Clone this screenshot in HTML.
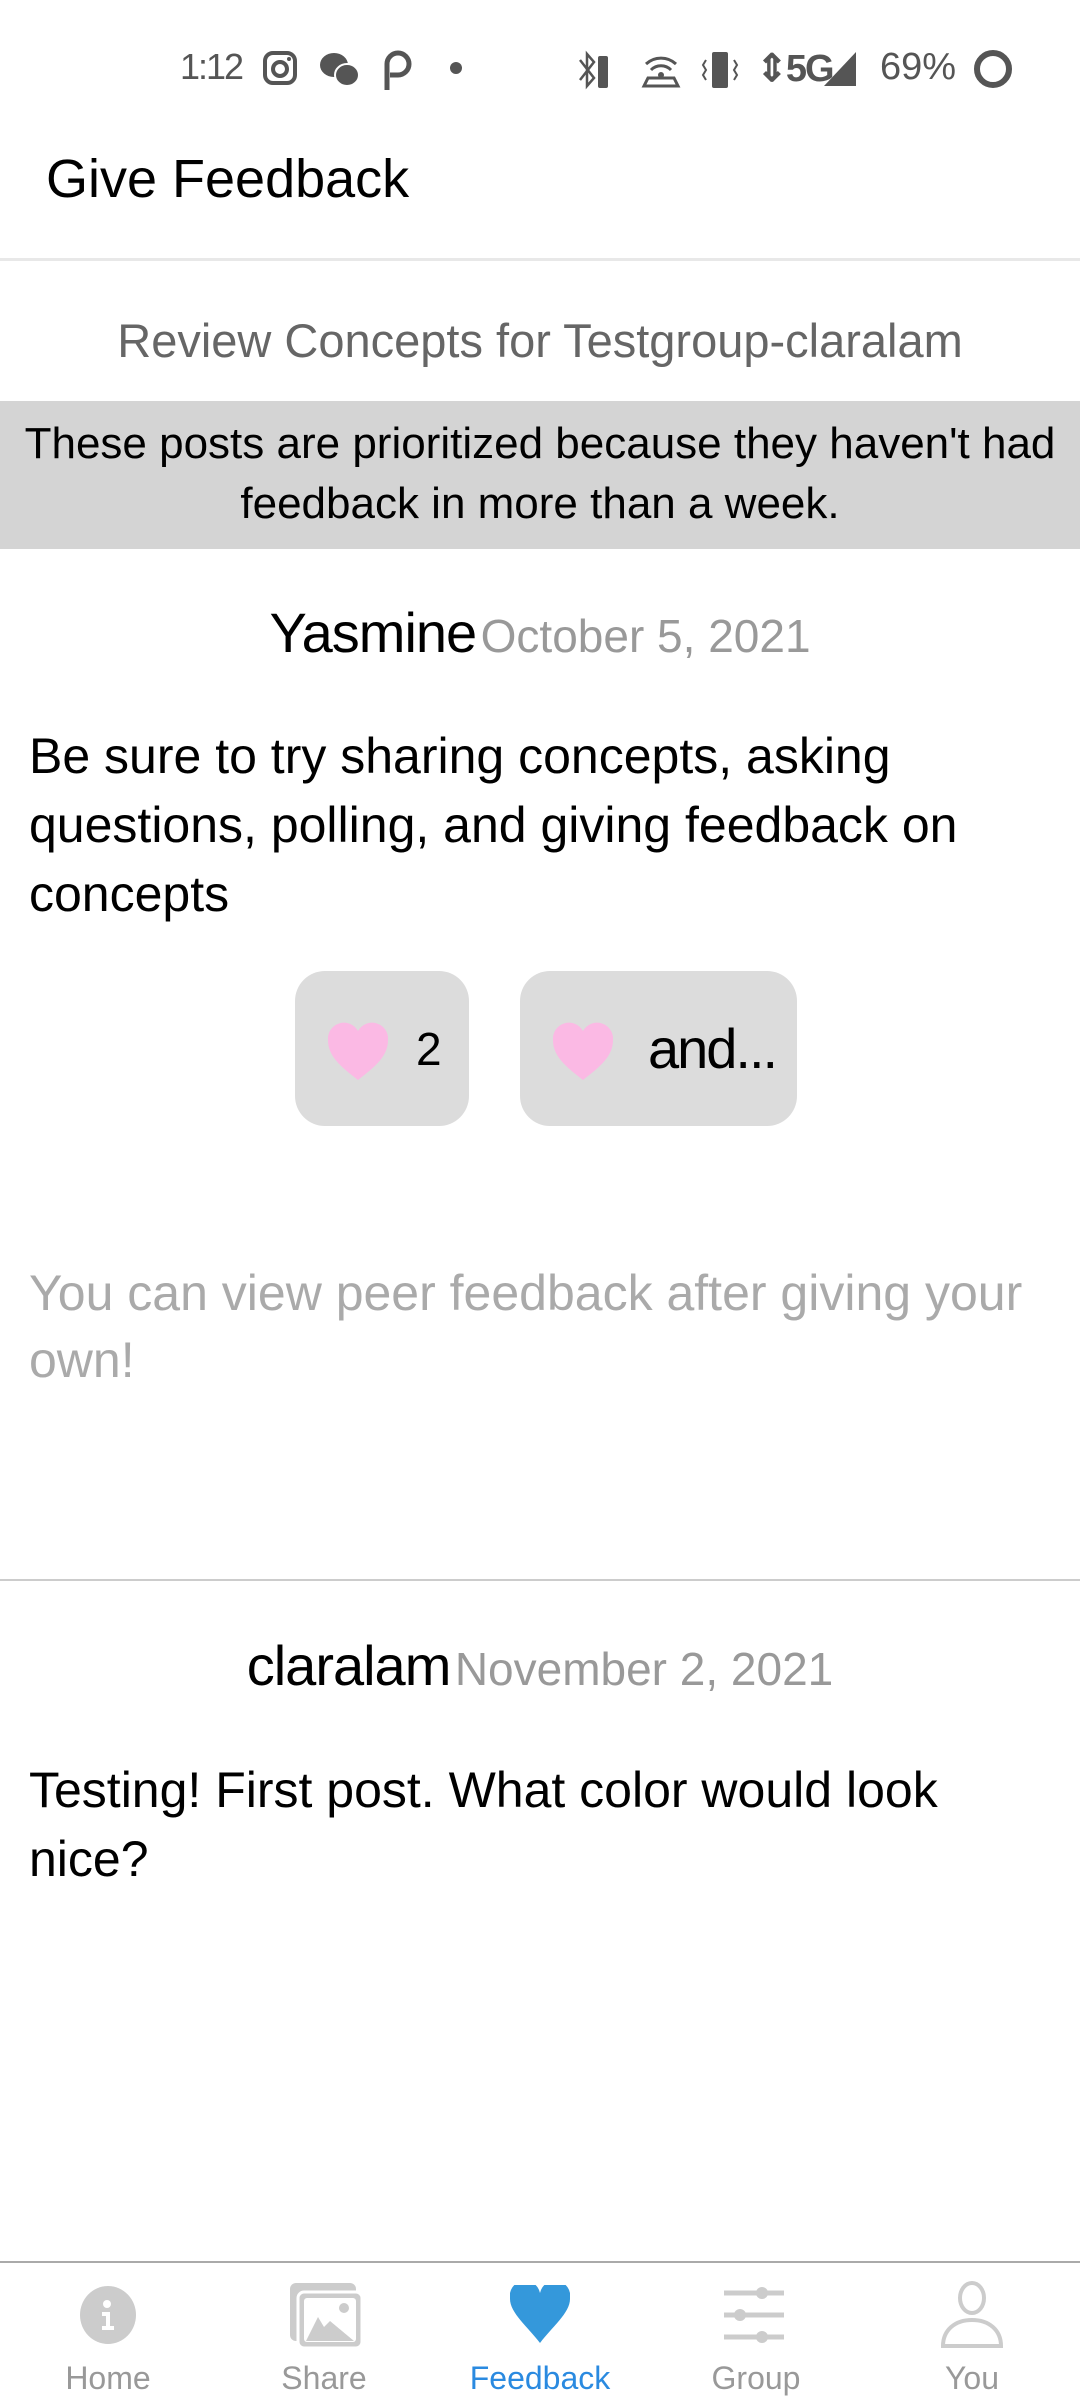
<!DOCTYPE html>
<html><head><meta charset="utf-8"><style>
*{margin:0;padding:0;box-sizing:border-box}
body{width:1080px;height:2400px;background:#fff;font-family:"Liberation Sans",sans-serif;position:relative;overflow:hidden;color:#000}
.a{position:absolute;white-space:nowrap}
.c{left:0;width:1080px;text-align:center}
.btn{position:absolute;background:#dcdcdc;border-radius:30px}
.nl{position:absolute;top:2360px;width:216px;text-align:center;font-size:32px;color:#999}
</style></head><body>
<!-- status bar -->
<div class="a" style="left:180px;top:46px;font-size:36px;color:#555;letter-spacing:-2px">1:12</div>
<svg class="a" style="left:262px;top:50px" width="36" height="36" viewBox="0 0 36 36"><rect x="3" y="3" width="30" height="30" rx="8" fill="none" stroke="#555" stroke-width="4"/><circle cx="18" cy="19" r="7" fill="none" stroke="#555" stroke-width="4"/><circle cx="27" cy="9" r="2" fill="#555"/></svg>
<svg class="a" style="left:318px;top:50px" width="44" height="40" viewBox="0 0 44 40"><ellipse cx="16" cy="15" rx="14" ry="12" fill="#555"/><ellipse cx="29" cy="25" rx="12" ry="11" fill="#555" stroke="#fff" stroke-width="2"/></svg>
<svg class="a" style="left:382px;top:50px" width="30" height="42" viewBox="0 0 30 42"><path d="M5 40V14a11 11 0 1 1 11 11H8" fill="none" stroke="#555" stroke-width="5"/></svg>
<div class="a" style="left:450px;top:62px;width:12px;height:12px;border-radius:6px;background:#555"></div>
<svg class="a" style="left:578px;top:50px" width="40" height="40" viewBox="0 0 40 40"><path d="M2 10L16 28L9 36V4l7 8L2 30" fill="none" stroke="#555" stroke-width="2.5"/><rect x="20" y="6" width="10" height="32" rx="2" fill="#555"/></svg>
<svg class="a" style="left:640px;top:52px" width="42" height="36" viewBox="0 0 42 36"><path d="M6 12a22 22 0 0 1 30 0M11 18a14 14 0 0 1 20 0" fill="none" stroke="#555" stroke-width="3"/><circle cx="21" cy="23" r="3" fill="#555"/><path d="M4 34h34l-4-8H8z" fill="none" stroke="#555" stroke-width="3"/></svg>
<svg class="a" style="left:700px;top:50px" width="40" height="40" viewBox="0 0 40 40"><rect x="12" y="2" width="16" height="36" rx="2" fill="#555"/><path d="M6 10l-3 5 3 5-3 5 3 5M34 10l3 5-3 5 3 5-3 5" fill="none" stroke="#555" stroke-width="2"/></svg>
<div class="a" style="left:756px;top:46px;font-size:38px;font-weight:bold;color:#555;letter-spacing:-2px">&#8661;5G</div>
<svg class="a" style="left:822px;top:50px" width="40" height="38" viewBox="0 0 40 38"><path d="M2 36L34 2V36Z" fill="#555"/></svg>
<div class="a" style="left:880px;top:46px;font-size:38px;color:#555">69%</div>
<svg class="a" style="left:972px;top:48px" width="42" height="42" viewBox="0 0 42 42"><circle cx="21" cy="21" r="16" fill="none" stroke="#555" stroke-width="6"/></svg>
<!-- header -->
<div class="a" style="left:46px;top:148px;font-size:54px">Give Feedback</div>
<div class="a" style="left:0;top:258px;width:1080px;height:3px;background:#e8e8e8"></div>
<div class="a c" style="top:313px;font-size:47px;color:#666">Review Concepts for Testgroup-claralam</div>
<div class="a" style="left:0;top:401px;width:1080px;height:148px;background:#d4d4d4"></div>
<div class="a c" style="top:414px;font-size:44px;line-height:60px;white-space:normal">These posts are prioritized because they haven't had<br>feedback in more than a week.</div>
<!-- post 1 -->
<div class="a c" style="top:600px;line-height:66px"><span style="font-size:56px;letter-spacing:-1px">Yasmine</span>&nbsp;<span style="font-size:46px;color:#999">October 5, 2021</span></div>
<div class="a" style="left:29px;top:722px;font-size:50px;line-height:69px;white-space:normal;width:1030px">Be sure to try sharing concepts, asking questions, polling, and giving feedback on concepts</div>
<div class="btn" style="left:295px;top:971px;width:174px;height:155px"></div>
<div class="btn" style="left:520px;top:971px;width:277px;height:155px"></div>
<svg class="a" style="left:328px;top:1022px" width="60" height="58" viewBox="0 0 60 58"><path d="M30 58C12 44 0 34 0 18A16 16 0 0 1 30 9A16 16 0 0 1 60 18C60 34 48 44 30 58Z" fill="#fbb9e4"/></svg>
<svg class="a" style="left:553px;top:1022px" width="60" height="58" viewBox="0 0 60 58"><path d="M30 58C12 44 0 34 0 18A16 16 0 0 1 30 9A16 16 0 0 1 60 18C60 34 48 44 30 58Z" fill="#fbb9e4"/></svg>
<div class="a" style="left:416px;top:1022px;font-size:46px">2</div>
<div class="a" style="left:648px;top:1016px;font-size:56px;letter-spacing:-2px">and...</div>
<div class="a" style="left:29px;top:1260px;font-size:50px;line-height:67px;color:#aaa;white-space:normal;width:1030px">You can view peer feedback after giving your own!</div>
<div class="a" style="left:0;top:1579px;width:1080px;height:2px;background:#ccc"></div>
<!-- post 2 -->
<div class="a c" style="top:1633px;line-height:66px"><span style="font-size:56px;letter-spacing:-1px">claralam</span>&nbsp;<span style="font-size:46px;color:#999">November 2, 2021</span></div>
<div class="a" style="left:29px;top:1756px;font-size:50px;line-height:69px;white-space:normal;width:960px">Testing! First post. What color would look nice?</div>
<!-- nav -->
<div class="a" style="left:0;top:2261px;width:1080px;height:2px;background:#aaa"></div>
<svg class="a" style="left:78px;top:2285px" width="60" height="60" viewBox="0 0 60 60"><ellipse cx="30" cy="30" rx="28" ry="29" fill="#ccc"/><circle cx="29" cy="19" r="4" fill="#fff"/><path d="M24 27h8v14h4v4H24v-4h4V31h-4z" fill="#fff"/></svg>
<svg class="a" style="left:288px;top:2281px" width="76" height="68" viewBox="0 0 76 68"><rect x="2" y="2" width="66" height="58" rx="6" fill="#ccc"/><rect x="10" y="11" width="64" height="56" rx="6" fill="#ccc" stroke="#fff" stroke-width="3"/><rect x="16" y="17" width="52" height="44" rx="3" fill="#fff"/><circle cx="56" cy="27" r="5" fill="#ccc"/><path d="M18 60L30 36L36 46L42 40L66 60Z" fill="#ccc"/></svg>
<svg class="a" style="left:510px;top:2285px" width="60" height="58" viewBox="0 0 60 58"><path d="M30 58C18 42 0 28 0 14A14 14 0 0 1 30 8A14 14 0 0 1 60 14C60 28 42 42 30 58Z" fill="#3498db"/></svg>
<svg class="a" style="left:722px;top:2287px" width="64" height="56" viewBox="0 0 64 56"><path d="M2 6h60M2 28h60M2 50h60" stroke="#ccc" stroke-width="5"/><circle cx="40" cy="6" r="6" fill="#ccc"/><circle cx="18" cy="28" r="6" fill="#ccc"/><circle cx="40" cy="50" r="6" fill="#ccc"/></svg>
<svg class="a" style="left:940px;top:2280px" width="64" height="70" viewBox="0 0 64 70"><ellipse cx="32" cy="18" rx="12" ry="15" fill="none" stroke="#ccc" stroke-width="4"/><path d="M3 66C3 50 15 40 32 40S61 50 61 66Z" fill="none" stroke="#ccc" stroke-width="4"/></svg>
<div class="nl" style="left:0">Home</div>
<div class="nl" style="left:216px">Share</div>
<div class="nl" style="left:432px;color:#2a8ae0">Feedback</div>
<div class="nl" style="left:648px">Group</div>
<div class="nl" style="left:864px">You</div>
</body></html>
